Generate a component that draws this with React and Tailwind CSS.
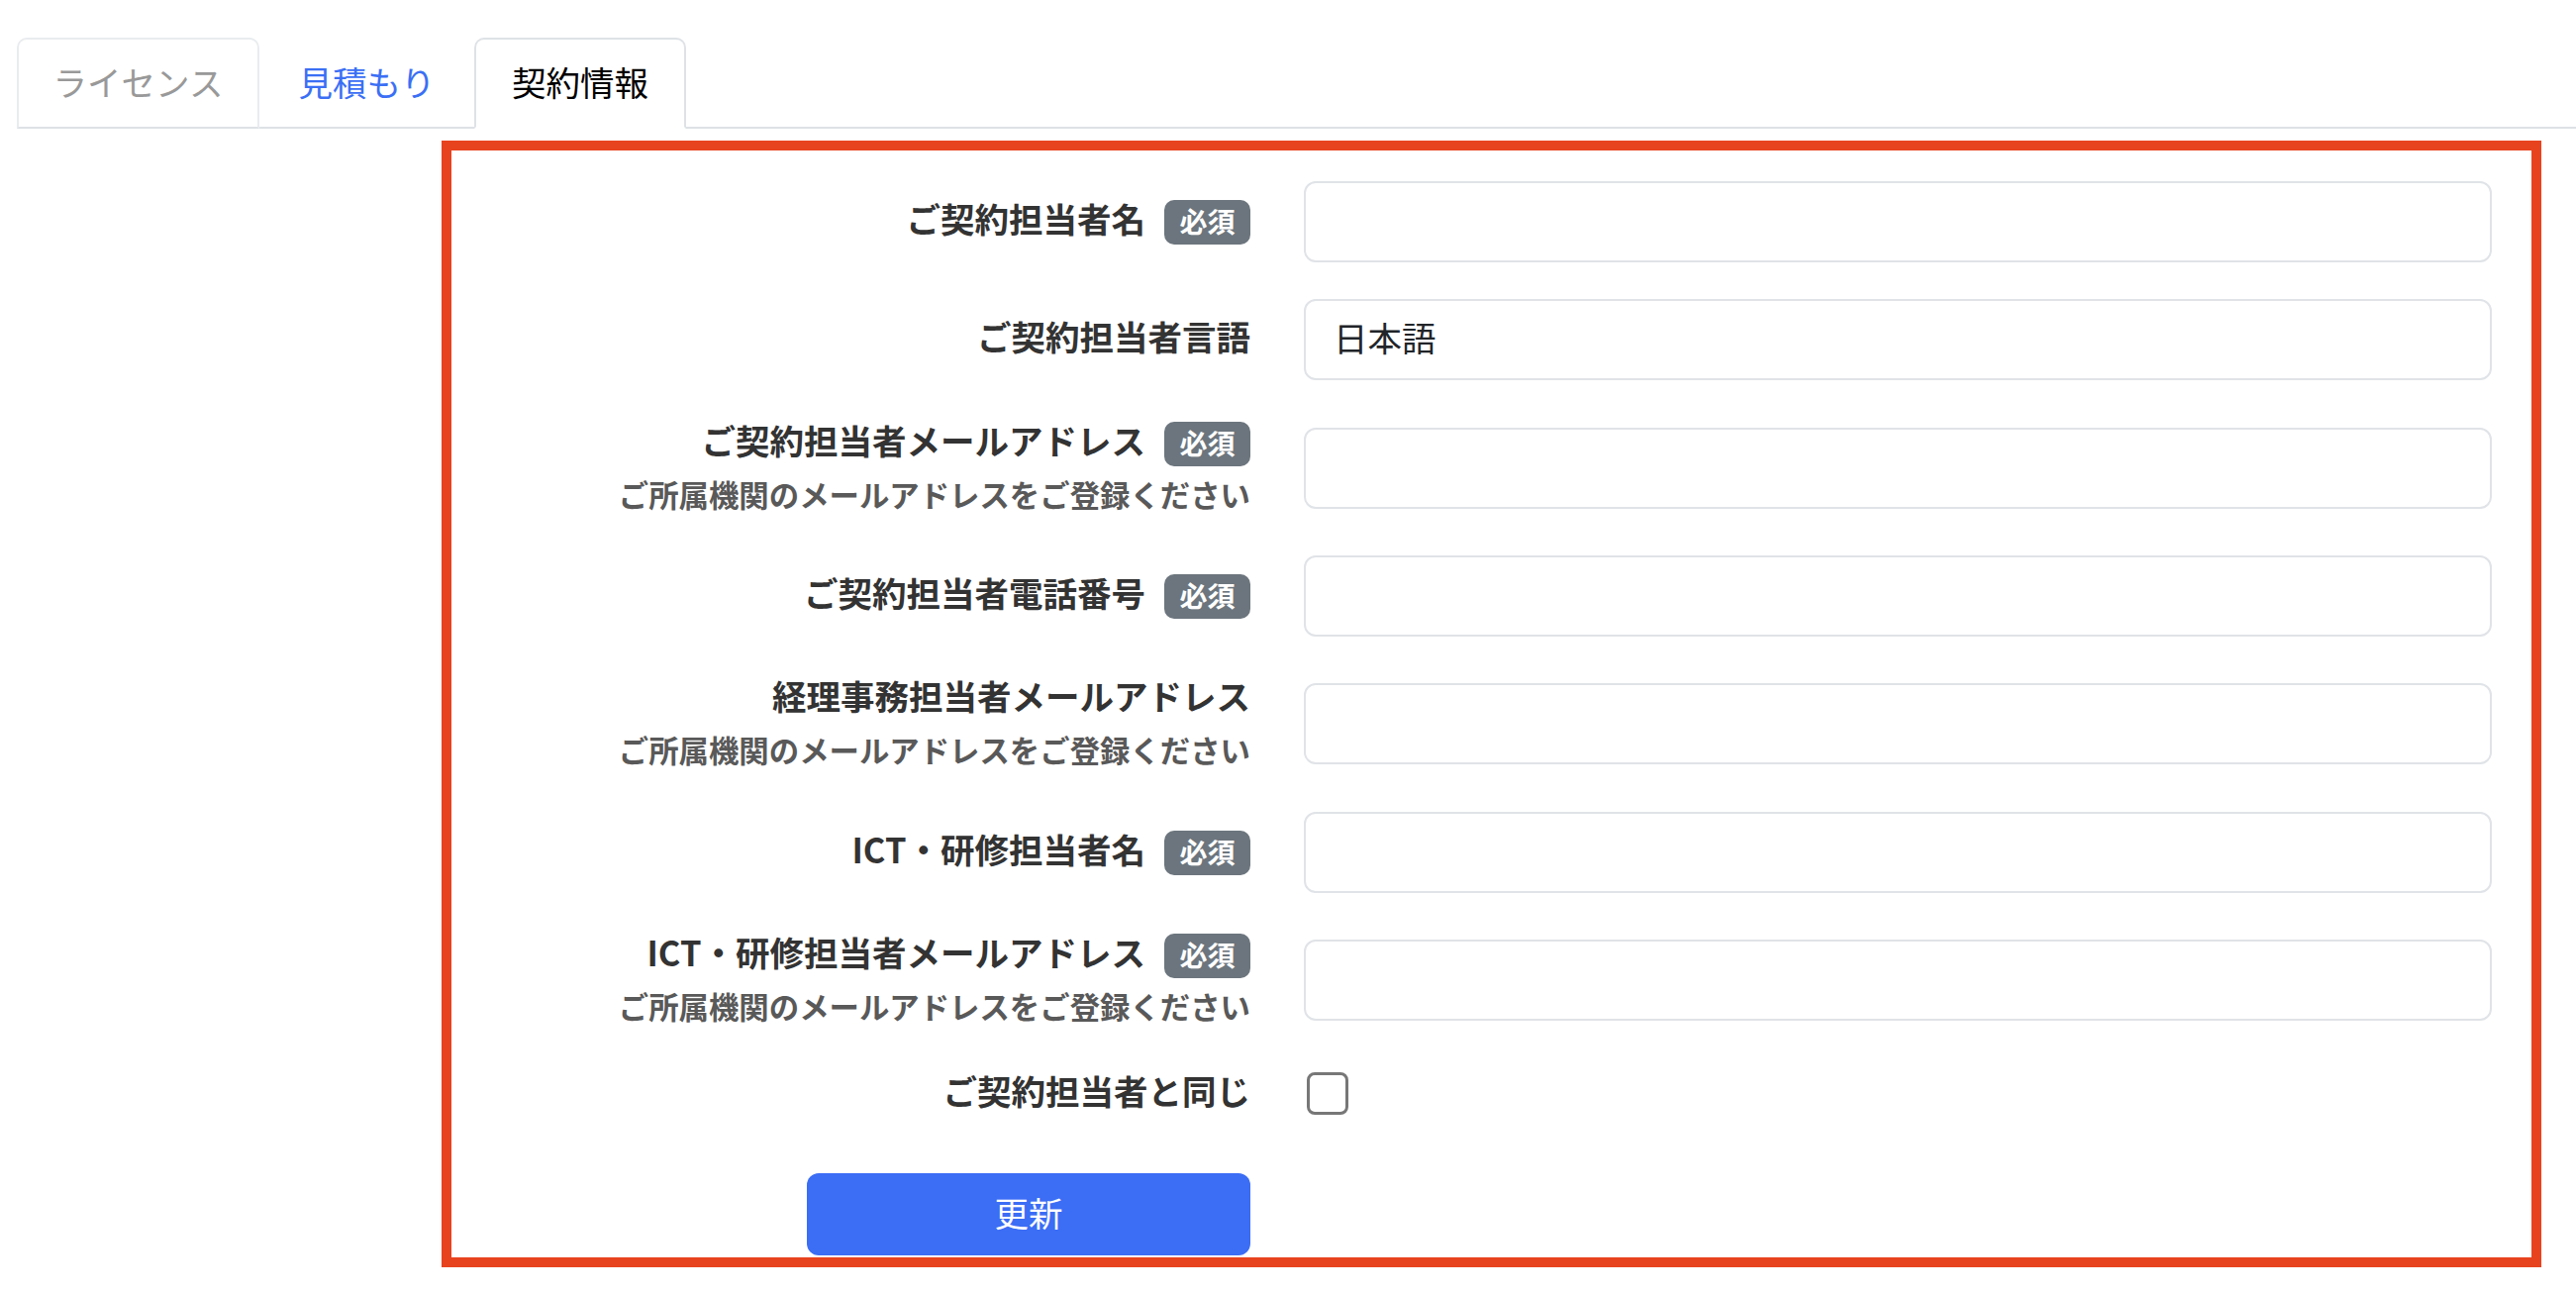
import React from "react";

const FONT = "font-['Noto_Sans_CJK_JP','Noto_Sans',sans-serif]";

function Badge() {
  return (
    <span className="inline-flex h-[45px] w-[87px] items-center justify-center rounded-[10px] bg-[#6c757d] pb-[3px] text-[28px] font-bold leading-none text-white">
      必須
    </span>
  );
}

function Label({ text, required, sub }) {
  const line = (
    <div className="flex h-[48px] items-center justify-end gap-[19px]">
      <span className="pb-[8px] text-[34.5px] font-bold leading-none text-[#333333]">{text}</span>
      {required && <Badge />}
    </div>
  );
  if (!sub) return line;
  return (
    <div className="flex flex-col items-end">
      {line}
      <div className="mt-[10px] flex h-[40px] items-center pb-[6px] text-[30.4px] font-bold leading-none text-[#595959]">
        ご所属機関のメールアドレスをご登録ください
      </div>
    </div>
  );
}

function Row({ text, required, sub, value, mt }) {
  return (
    <div className={`flex items-center ${mt}`}>
      <div className="flex w-[807px] shrink-0 justify-end">
        <Label text={text} required={required} sub={sub} />
      </div>
      <div className="ml-[54px] w-[1200px]">
        <div className="flex h-[82px] items-center rounded-[12px] border-2 border-[#e0e3e7] bg-white pb-[5px] pl-[28px] text-[34.5px] leading-none text-[#212529]">
          {value}
        </div>
      </div>
    </div>
  );
}

export default function App() {
  return (
    <div className={`h-[1306px] w-[2602px] overflow-hidden bg-white ${FONT}`}>
      <div className="ml-[17px] mt-[38px] flex border-b-2 border-[#dee2e6]">
        <div className="-mb-[2px] flex h-[92px] w-[245px] items-center justify-center rounded-t-[10px] border-2 border-[#e9ecef] border-b-[#dee2e6] pb-[3px] text-[34.5px] text-[#999999]">
          ライセンス
        </div>
        <div className="-mb-[2px] flex h-[92px] w-[217px] items-center justify-center rounded-t-[10px] border-2 border-transparent pb-[3px] text-[34.5px] text-[#3b6ff5]">
          見積もり
        </div>
        <div className="-mb-[2px] flex h-[92px] w-[214px] items-center justify-center rounded-t-[10px] border-2 border-[#dee2e6] border-b-white bg-white pb-[3px] text-[34.5px] text-black">
          契約情報
        </div>
      </div>

      <div className="ml-[446px] mt-[12px] w-[2121px] border-[10px] border-[#e8431f] pb-[2px] pr-[40px] pt-[31px]">
        <Row text="ご契約担当者名" required mt="" />
        <Row text="ご契約担当者言語" value="日本語" mt="mt-[37px]" />
        <Row text="ご契約担当者メールアドレス" required sub mt="mt-[40px]" />
        <Row text="ご契約担当者電話番号" required mt="mt-[39px]" />
        <Row text="経理事務担当者メールアドレス" sub mt="mt-[39px]" />
        <Row text="ICT・研修担当者名" required mt="mt-[40px]" />
        <Row text="ICT・研修担当者メールアドレス" required sub mt="mt-[39px]" />

        <div className="mt-[41px] flex items-center">
          <div className="flex w-[807px] shrink-0 justify-end">
            <div className="flex h-[48px] items-center">
              <span className="pb-[6px] text-[34.5px] font-bold leading-none text-[#333333]">ご契約担当者と同じ</span>
            </div>
          </div>
          <div className="ml-[57px] h-[43px] w-[42px] rounded-[8px] border-[3px] border-[#777777] bg-white" />
        </div>

        <div className="mt-[57px] flex">
          <div className="flex w-[807px] shrink-0 justify-end">
            <button className="flex h-[83px] w-[448px] items-center justify-center rounded-[12px] bg-[#3b6df5] pb-[5px] text-[34.5px] leading-none text-white">
              更新
            </button>
          </div>
        </div>
      </div>
    </div>
  );
}
